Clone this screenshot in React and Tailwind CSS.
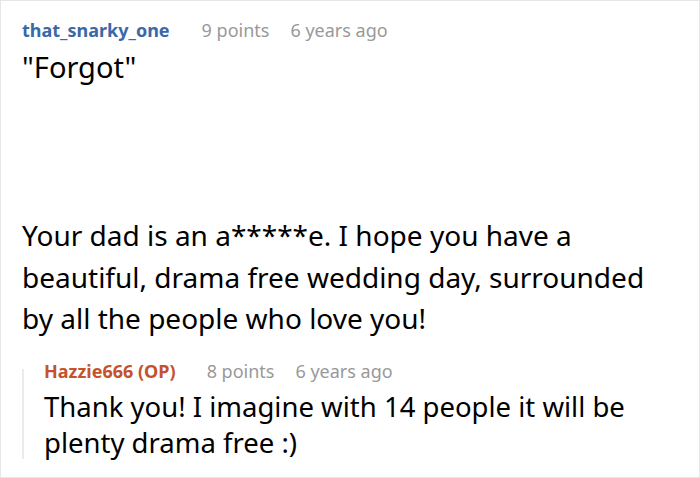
export default function App() {
  return (
    <div className="w-[700px] h-[478px] bg-white border border-[#e6e6e6] overflow-hidden font-['Noto_Sans',sans-serif] text-black">
      <div className="pl-[21px] pt-[16px]">
        <div className="flex items-baseline text-[18px] leading-[26px]">
          <span className="font-bold text-[#3a68a8]">that_snarky_one</span>
          <span className="ml-[32px] text-[#999999]">9 points</span>
          <span className="ml-[21px] text-[#999999]">6 years ago</span>
        </div>
        <p className="mt-[5px] text-[29px] leading-[38px]">"Forgot"</p>

        <p className="mt-[129px] w-[660px] text-[28px] leading-[41.5px]">
          Your dad is an a*****e. I hope you have a beautiful, drama free wedding day, surrounded by all the people who love you!
        </p>

        <div className="mt-[18px] flex">
          <div className="w-[2px] mt-[11px] mb-[2px] bg-[#ebebeb]" />
          <div className="pl-[20px]">
            <div className="flex items-baseline text-[18px] leading-[26px]">
              <span className="font-bold text-[#c4532b]">Hazzie666 (OP)</span>
              <span className="ml-[31px] text-[#999999]">8 points</span>
              <span className="ml-[21px] text-[#999999]">6 years ago</span>
            </div>
            <p className="mt-[5px] w-[645px] text-[27.5px] leading-[36px]">
              Thank you! I imagine with 14 people it will be plenty drama free :)
            </p>
          </div>
        </div>
      </div>
    </div>
  );
}
